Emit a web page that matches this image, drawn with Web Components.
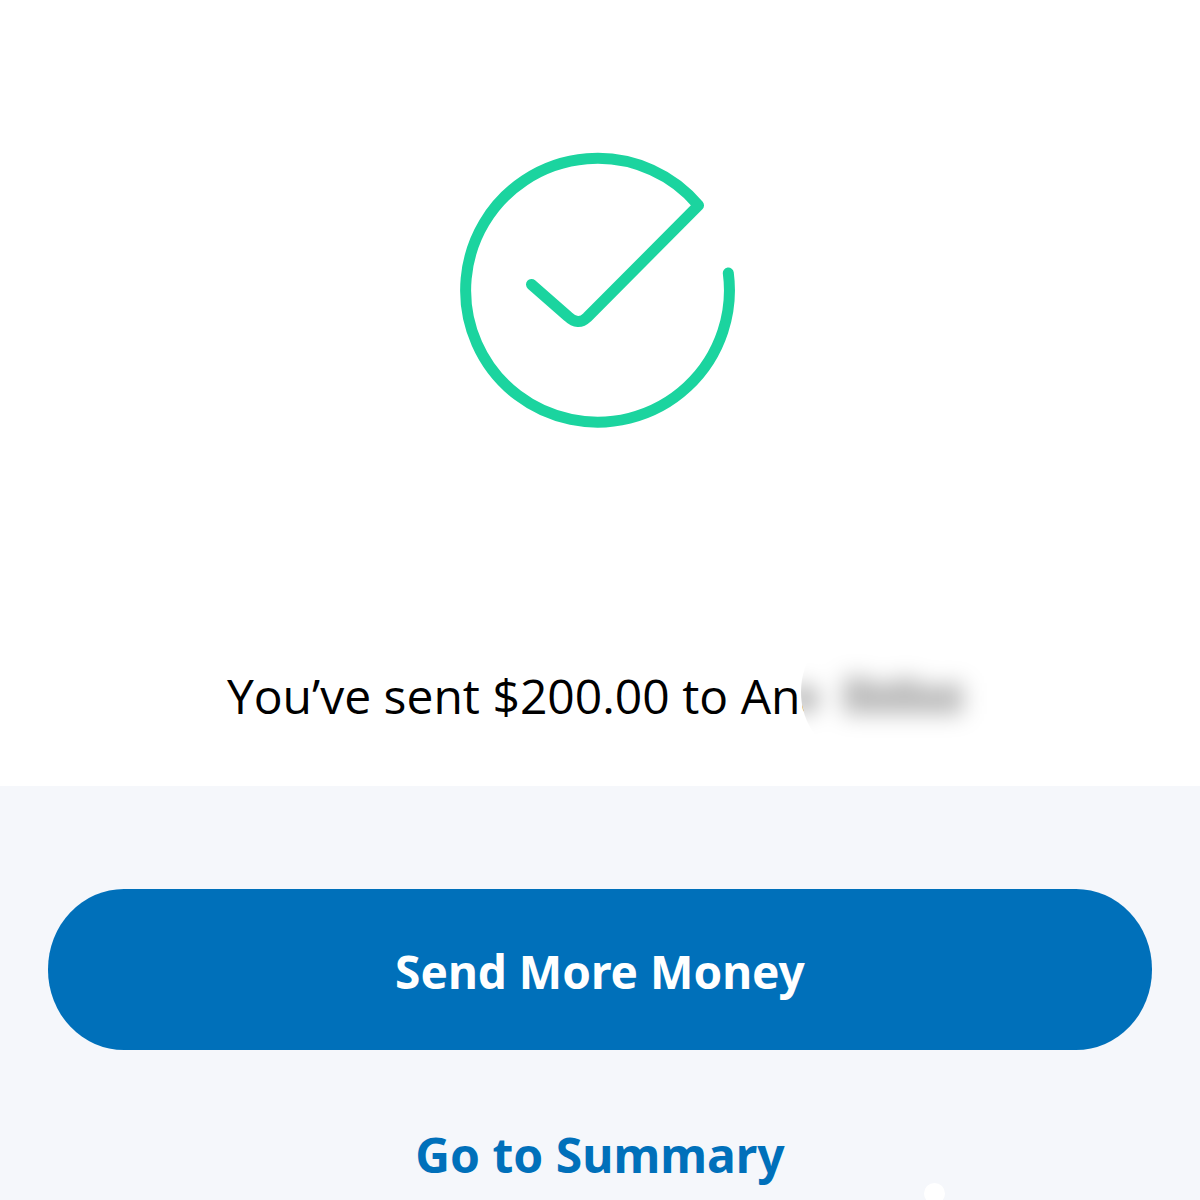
<!DOCTYPE html>
<html lang="en">
<head>
<meta charset="utf-8">
<meta name="viewport" content="width=device-width, initial-scale=1">
<title>Money sent</title>
<style>
  html, body { margin: 0; min-height: 100%; background: #f5f7fb; }
  body { font-family: "Open Sans", "Noto Sans", sans-serif; overflow-x: hidden; }
</style>
</head>
<body>
<payment-success>
  <success-icon slot="icon"></success-icon>
  <span slot="message">You’ve sent $200.00 to Ana</span>
  <redacted-name slot="message"></redacted-name>
  <pill-button slot="actions">Send More Money</pill-button>
  <text-link slot="actions">Go to Summary</text-link>
</payment-success>

<script>
class BaseElement extends HTMLElement {
  constructor() {
    super();
    this.attachShadow({ mode: "open" }).innerHTML = this.constructor.markup;
  }
}

class PaymentSuccess extends BaseElement {
  static markup = `
    <style>
      :host { display: flex; flex-direction: column; min-height: 100vh; position: relative; overflow: hidden; background: #f5f7fb; }
      main { display: flex; flex-direction: column; align-items: center; gap: 214px; padding: 130px 24px 58px; background: #fff; }
      h1 { display: flex; align-items: center; margin: 0; font-weight: 400; font-size: 48px; line-height: 64px; color: #000; white-space: nowrap; }
      footer { display: flex; flex-direction: column; align-items: center; gap: 73px; padding: 103px 48px 0; }
      .dot { position: absolute; left: 77%; bottom: -4px; width: 21px; height: 21px; border-radius: 50%; background: #fff; }
    </style>
    <main>
      <slot name="icon"></slot>
      <h1><slot name="message"></slot></h1>
    </main>
    <footer><slot name="actions"></slot></footer>
    <div class="dot"></div>`;
}

class SuccessIcon extends BaseElement {
  static markup = `
    <style>
      :host { display: block; width: 320px; height: 320px; }
      svg { display: block; width: 100%; height: 100%; }
    </style>
    <svg viewBox="440 130 320 320" fill="none" stroke="#1bd49f" stroke-width="11" stroke-linecap="round" stroke-linejoin="round" role="img" aria-label="Success">
      <path d="M531.5 284.5L568 316.5Q578 326 587 317.5L698.5 205.4A131.9 131.9 0 1 0 728.3 273"/>
    </svg>`;
}

class RedactedName extends BaseElement {
  static markup = `
    <style>
      :host { display: block; position: relative; width: 172px; height: 64px; margin-left: -26px; }
      .patch { position: absolute; inset: -32px -40px -24px 0; background: #fff; border-radius: 48px 0 0 48px / 50%; overflow: hidden; }
      svg { display: block; width: 100%; height: 100%; }
    </style>
    <div class="patch">
      <svg viewBox="0 0 212 120" aria-hidden="true">
        <defs><filter id="soft" filterUnits="userSpaceOnUse" x="-50" y="-30" width="310" height="180"><feGaussianBlur stdDeviation="11"/></filter></defs>
        <g filter="url(#soft)" fill="#000">
          <ellipse cx="3" cy="67" rx="15" ry="14" opacity=".3"/>
          <path d="M42 45H64L80 53L100 46H112L124 54L162 51V82H42Z" opacity=".26"/>
        </g>
      </svg>
    </div>`;
}

class PillButton extends BaseElement {
  static markup = `
    <style>
      :host { display: block; align-self: stretch; }
      button { display: block; width: 100%; margin: 0; padding: 50px 24px 47px; border: 0; border-radius: 76px / 80px; background: #0070ba; color: #fff; font: 700 46px/64px "Noto Sans", "Open Sans", sans-serif; cursor: pointer; }
    </style>
    <button type="button"><slot></slot></button>`;
}

class TextLink extends BaseElement {
  static markup = `
    <style>
      :host { display: block; }
      a { display: block; color: #0070ba; text-decoration: none; font: 700 48px/64px "Noto Sans", "Open Sans", sans-serif; }
    </style>
    <a href="#summary"><slot></slot></a>`;
}

customElements.define("success-icon", SuccessIcon);
customElements.define("redacted-name", RedactedName);
customElements.define("pill-button", PillButton);
customElements.define("text-link", TextLink);
customElements.define("payment-success", PaymentSuccess);
</script>
</body>
</html>
